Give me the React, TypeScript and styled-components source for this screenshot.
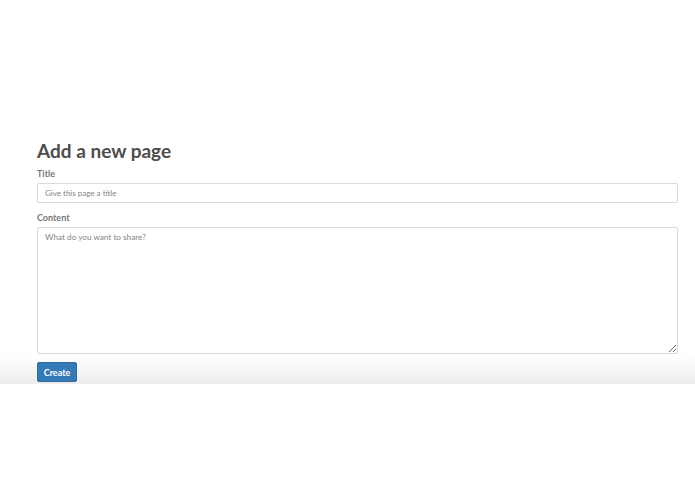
import React from "react";
import styled, { createGlobalStyle } from "styled-components";

const Global = createGlobalStyle`
  html, body { margin: 0; padding: 0; background: #fff; }
  body { font-family: Lato, "Open Sans", sans-serif; }
  * { box-sizing: border-box; }
`;

const Page = styled.div`
  width: 695px;
  height: 494px;
  background: #fff;
  display: flex;
  flex-direction: column;
`;

const Content = styled.div`
  padding: 139px 17px 0 37px;
  display: flex;
  flex-direction: column;
`;

const Heading = styled.h1`
  margin: 0 0 5px;
  font-family: Lato, sans-serif;
  font-weight: 700;
  font-size: 19px;
  line-height: 24px;
  color: #4d4d4d;
`;

const Label = styled.label`
  display: block;
  font-size: 9px;
  font-weight: 700;
  color: #777;
  line-height: 12px;
  margin-bottom: 3px;
`;

const Field = styled.div<{ $gap: number }>`
  margin-bottom: ${(p) => p.$gap}px;
`;

const Input = styled.input`
  display: block;
  width: 100%;
  height: 20px;
  border: 1px solid #d9d9d9;
  border-radius: 2px;
  padding: 0 7px;
  font-family: Lato, sans-serif;
  font-size: 8px;
  color: #555;
  outline: none;
  &::placeholder { color: #858585; }
`;

const TextArea = styled.textarea`
  display: block;
  width: 100%;
  height: 127px;
  border: 1px solid #d9d9d9;
  border-radius: 2px;
  padding: 4px 7px;
  font-family: Lato, sans-serif;
  font-size: 8.2px;
  color: #555;
  outline: none;
  resize: vertical;
  &::placeholder { color: #858585; }
`;

const ActionBar = styled.div`
  margin-top: 2px;
  height: 28px;
  background: linear-gradient(to bottom, #ffffff 0%, #ececec 100%);
  padding: 6px 0 0 37px;
`;

const Button = styled.button`
  display: block;
  height: 20px;
  width: 40px;
  padding: 0;
  border: 1px solid #2e6da4;
  border-radius: 2px;
  background: #337ab7;
  color: #fff;
  font-family: Lato, sans-serif;
  font-weight: 700;
  font-size: 9px;
  cursor: pointer;
`;

export default function App() {
  return (
    <Page>
      <Global />
      <Content>
        <Heading>Add a new page</Heading>
        <Field $gap={9}>
          <Label>Title</Label>
          <Input placeholder="Give this page a title" />
        </Field>
        <Field $gap={0}>
          <Label>Content</Label>
          <TextArea placeholder="What do you want to share?" />
        </Field>
      </Content>
      <ActionBar>
        <Button>Create</Button>
      </ActionBar>
    </Page>
  );
}
